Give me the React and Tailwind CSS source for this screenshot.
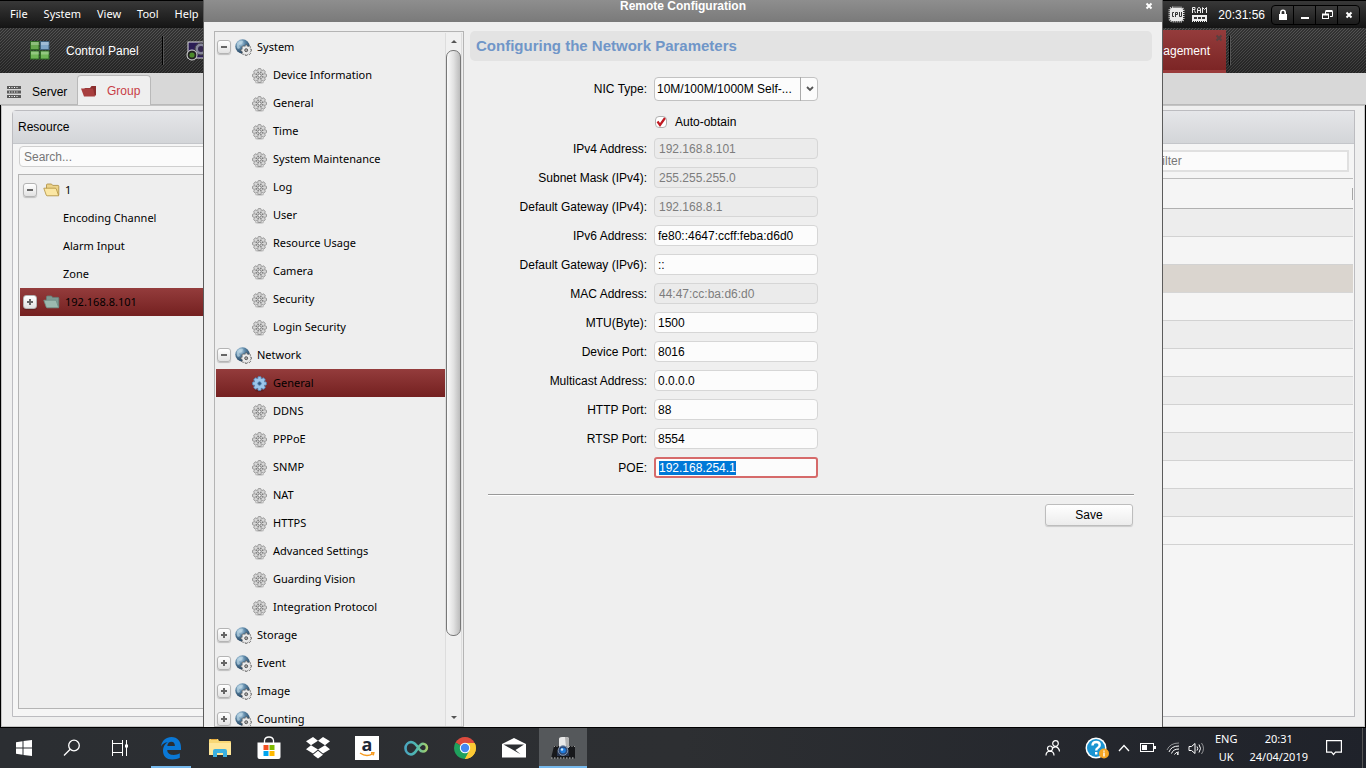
import React, { useEffect, useRef, useState } from "react";

const LABEL_FONT = "font-['Liberation_Sans',Arial,sans-serif]";
const TREE_FONT = "font-['Noto_Sans','Open_Sans',sans-serif]";

const tree = [
  {
    name: "System",
    children: [
      "Device Information",
      "General",
      "Time",
      "System Maintenance",
      "Log",
      "User",
      "Resource Usage",
      "Camera",
      "Security",
      "Login Security",
    ],
  },
  {
    name: "Network",
    children: [
      "General",
      "DDNS",
      "PPPoE",
      "SNMP",
      "NAT",
      "HTTPS",
      "Advanced Settings",
      "Guarding Vision",
      "Integration Protocol",
    ],
  },
  { name: "Storage", children: [] },
  { name: "Event", children: [] },
  { name: "Image", children: [] },
  { name: "Counting", children: [] },
];

const fields = [
  { id: "ipv4", label: "IPv4 Address:", value: "192.168.8.101", disabled: true },
  { id: "mask", label: "Subnet Mask (IPv4):", value: "255.255.255.0", disabled: true },
  { id: "gw4", label: "Default Gateway (IPv4):", value: "192.168.8.1", disabled: true },
  { id: "ipv6", label: "IPv6 Address:", value: "fe80::4647:ccff:feba:d6d0" },
  { id: "gw6", label: "Default Gateway (IPv6):", value: "::" },
  { id: "mac", label: "MAC Address:", value: "44:47:cc:ba:d6:d0", disabled: true },
  { id: "mtu", label: "MTU(Byte):", value: "1500" },
  { id: "devport", label: "Device Port:", value: "8016" },
  { id: "multicast", label: "Multicast Address:", value: "0.0.0.0" },
  { id: "http", label: "HTTP Port:", value: "88" },
  { id: "rtsp", label: "RTSP Port:", value: "8554" },
];

/* ---------- small drawings ---------- */

function Gear({ active }) {
  const spokes = [0, 45, 90, 135, 180, 225, 270, 315];
  const dark = active ? "#4f82b3" : "#8a8a8a";
  const light = active ? "#9cc6ea" : "#d6d6d6";
  return (
    <svg width="15" height="16" viewBox="0 0 16 17" className="shrink-0" aria-hidden="true">
      <ellipse cx="8" cy="15.6" rx="5" ry="0.8" fill="#000" opacity="0.25" />
      {spokes.map((a) => (
        <rect key={a} x="6.2" y="0.6" width="3.6" height="4.500" rx="1" fill={light} stroke={dark} strokeWidth="0.9" transform={`rotate(${a} 8 8)`} />
      ))}
      <circle cx="8" cy="8" r="5.300" fill={light} />
      {!active &&
        spokes.map((a) => (
          <circle key={a} cx="8" cy="4.300" r="0.9" fill="#7c7c7c" transform={`rotate(${a + 22} 8 8)`} />
        ))}
      <circle cx="8" cy="8" r="1.800" fill={active ? "#33567a" : "#f4f4f4"} stroke={active ? dark : "#6c6c6c"} strokeWidth="1" />
    </svg>
  );
}

function Globe() {
  const spokes = [0, 45, 90, 135, 180, 225, 270, 315];
  return (
    <svg width="17" height="17" viewBox="0 0 17 17" className="shrink-0" aria-hidden="true">
      <defs>
        <radialGradient id="globeFill" cx="0.35" cy="0.25" r="0.8">
          <stop offset="0" stopColor="#c3dcec" />
          <stop offset="0.4" stopColor="#5d88a8" />
          <stop offset="1" stopColor="#1d3a55" />
        </radialGradient>
      </defs>
      <circle cx="7.500" cy="7.500" r="7.200" fill="url(#globeFill)" />
      <path d="M2 4q3-3 6-2l-1 3-3 1 1 3-2 1q-2-2-1-6z" fill="#b9d4e2" opacity="0.7" />
      {spokes.map((a) => (
        <rect key={a} x="10.200" y="5.800" width="2" height="3" rx="0.6" fill="#eee" stroke="#444" strokeWidth="0.7" transform={`rotate(${a} 11.2 11.2)`} />
      ))}
      <circle cx="11.200" cy="11.200" r="4" fill="#eaeaea" />
      <circle cx="11.200" cy="11.200" r="1.500" fill="#aaa" stroke="#444" strokeWidth="0.8" />
    </svg>
  );
}

function Toggle({ open, label, onClick }) {
  return (
    <button
      type="button"
      aria-label={label}
      onClick={onClick}
      className="flex h-3.5 w-3.5 shrink-0 items-center justify-center rounded-[3px] border border-[#b4b4b4] bg-gradient-to-b from-white to-[#e2e2e2] shadow-[0_1px_1px_rgba(0,0,0,0.2)]"
    >
      <svg width="8" height="8" viewBox="0 0 8 8" aria-hidden="true">
        <path d={open ? "M1 3h6v2H1z" : "M1 3h2V1h2v2h2v2H5v2H3V5H1z"} fill="#666" />
      </svg>
    </button>
  );
}

function Folder({ tone }) {
  const yellow = tone === "yellow";
  return (
    <svg width="17" height="14" viewBox="0 0 17 14" className="shrink-0" aria-hidden="true">
      <path d="M3.500 12V2q0-1 1-1h4l1.200 1.400H15q.8 0 .8.8V12z" fill={yellow ? "#ecd38a" : "#7d9a92"} stroke={yellow ? "#a98a3c" : "#66807a"} strokeWidth="0.8" />
      <path d="M.8 5.200h11.400q.8 0 1.100.8l2.400 6.800H4.200q-.7 0-1-.8z" fill={yellow ? "#fbe7a4" : "#9bbab0"} stroke={yellow ? "#b0903f" : "#6e8f86"} strokeWidth="0.8" />
    </svg>
  );
}

/* ---------- client window behind the dialog ---------- */

function WindowBar() {
  const buttons = [
    ["Lock", <g key="l"><rect x="3" y="6" width="8" height="6" fill="#fff" /><path d="M4.800 6V4.500a2.200 2.200 0 0 1 4.400 0V6" fill="none" stroke="#fff" strokeWidth="1.600" /></g>],
    ["Minimize", <rect key="m" x="3" y="9" width="8" height="2" fill="#fff" />],
    ["Restore", <g key="r" fill="none" stroke="#fff"><path d="M5.500 6V3.500h7v5H10" /><path d="M5.500 3h7" strokeWidth="2" /><rect x="2.500" y="6.500" width="6" height="4" /><path d="M2 6.500h7" strokeWidth="2" /></g>],
    ["Close", <path key="c" d="M4.500 4.500l5 5M9.500 4.500l-5 5" stroke="#fff" strokeWidth="2" />],
  ];
  return (
    <div className="flex h-7 shrink-0 items-center border-t border-black bg-gradient-to-b from-[#383838] to-[#151515] pr-1.5 text-white">
      <nav className={`flex items-center gap-4 pl-2.5 text-[11px] ${TREE_FONT}`}>
        {["File", "System", "View", "Tool", "Help"].map((m) => (
          <button key={m} type="button">{m}</button>
        ))}
      </nav>
      <div className="ml-auto flex items-center">
        <svg width="17" height="17" viewBox="0 0 17 17" aria-hidden="true">
          <rect x="1.500" y="1.500" width="14" height="14" rx="3" fill="none" stroke="#ddd" strokeWidth="2" strokeDasharray="1 1" />
          <rect x="2" y="2" width="13" height="13" rx="2" fill="#e8e8e8" />
          <path d="M6 6.500H4.500v4H6M7.500 11V6.500h2v2h-2M11.500 6v4.500h2V6" fill="none" stroke="#333" />
        </svg>
        <svg width="17" height="17" viewBox="0 0 17 17" className="ml-1.5" aria-hidden="true">
          <path d="M1.500 7V1.500h2.500v2H2M3.500 4.500l1 2.500M6.500 7V3l1-1.500h1l1 1.500v4M6.500 4.500h3M11.500 7V1.500l2 2 2-2V7" fill="none" stroke="#eee" />
          <rect x="1" y="9" width="15" height="6" fill="#eee" />
          <path d="M3 11h3v2H3zM7 11h3v2H7zM11 11h3v2h-3z" fill="#333" />
          <path d="M1 15.500h15" stroke="#eee" strokeDasharray="1 1" />
        </svg>
        <span className="mr-1.5 ml-2.5 text-xs">20:31:56</span>
        <div className="flex h-5 overflow-hidden rounded-sm border border-black bg-gradient-to-b from-[#3b3b3b] to-[#1c1c1c]">
          {buttons.map(([name, art]) => (
            <button key={name} type="button" aria-label={name} className="flex w-[22px] items-center justify-center border-r border-black last:w-[21px] last:border-r-0">
              <svg width="14" height="14" viewBox="0 0 14 14" aria-hidden="true">{art}</svg>
            </button>
          ))}
        </div>
      </div>
    </div>
  );
}

function Toolbar() {
  return (
    <div className="flex h-[45px] shrink-0 items-stretch bg-[linear-gradient(135deg,rgba(0,0,0,0.4)_25%,transparent_25%,transparent_50%,rgba(0,0,0,0.4)_50%,rgba(0,0,0,0.4)_75%,transparent_75%),linear-gradient(#555,#3c3c3c)] bg-[length:3px_3px,100%_100%] text-xs text-white">
      <button type="button" className="flex items-center pl-[30px]">
        <svg width="20" height="19" viewBox="0 0 20 19" aria-hidden="true">
          <rect x="0.500" y="0.500" width="8.500" height="8" fill="#68a84f" stroke="#2f6a24" />
          <rect x="10.500" y="0.500" width="8.500" height="8" fill="#7fa6c8" stroke="#3e627f" />
          <rect x="0.500" y="10" width="8.500" height="8" fill="#6fb556" stroke="#2f6a24" />
          <rect x="10.500" y="10" width="8.500" height="8" fill="#6fb556" stroke="#2f6a24" />
          <path d="M1 1h8v3H1zM1 10.500h8v3H1zM11 10.500h8v3h-8zM11 1h8v3h-8z" fill="#fff" opacity="0.250" />
        </svg>
        <span className="ml-4">Control Panel</span>
      </button>
      <span className="my-2 ml-[23px] w-0.5 border-l border-black bg-[#555]" />
      <button type="button" className="ml-[22px] flex items-center" aria-label="Main View">
        <svg width="22" height="22" viewBox="0 0 22 22" aria-hidden="true">
          <rect x="2" y="2" width="20" height="16" fill="#2b1d55" stroke="#ddd" />
          <circle cx="15" cy="9" r="6" fill="#85859a" stroke="#444" />
          <circle cx="15" cy="9" r="3" fill="#33274d" />
          <circle cx="6" cy="15" r="5" fill="#222" stroke="#ddd" />
          <circle cx="6" cy="15" r="2.600" fill="#4c8a2b" />
        </svg>
      </button>
      <div className="mt-0.5 mr-[3px] ml-auto flex items-center border-b-[3px] border-[#9a3b3b] bg-gradient-to-b from-[#943c3c] to-[#7c2525] pr-0.5 pl-4">
        <button type="button" className="pt-0.5">Device Management</button>
        <svg width="14" height="8" viewBox="0 0 14 8" className="-mt-6" aria-hidden="true">
          <path d="M6.500 1.500l5 5M11.500 1.500l-5 5" stroke="#5b4040" strokeWidth="2" />
        </svg>
      </div>
      <span className="my-2 mr-[135px] w-0.5 border-l border-black bg-[#555]" />
    </div>
  );
}

function TabStrip() {
  return (
    <div className="flex h-8 shrink-0 items-end border-b border-[#b9b9b9] bg-[#d8d8d8] text-xs">
      <button type="button" className="flex h-[25px] w-[77px] items-center pl-[7px]">
        <svg width="14" height="12" viewBox="0 0 14 12" aria-hidden="true">
          <path d="M0 0h14v3H0zM0 4.500h14v3H0zM0 9h14v3H0z" fill="#5a5a5a" />
          <path d="M2 1.500h10M2 6h10M2 10.500h10" stroke="#fff" strokeDasharray="1 1.500" />
        </svg>
        <span className="ml-[11px]">Server</span>
      </button>
      <button type="button" className="-mb-px flex h-[30px] w-[74px] items-center rounded-t border border-b-0 border-[#b9b9b9] bg-[#efefef] pl-[3px] text-[#c83c46]">
        <svg width="16" height="12" viewBox="0 0 16 12" aria-hidden="true">
          <path d="M3 3h6l1.500-2H15v9l-1 1z" fill="#8b2e2e" />
          <path d="M0 3.500h12l2 8H3z" fill="#a83e3e" />
        </svg>
        <span className="ml-2.5">Group</span>
      </button>
    </div>
  );
}

const PANEL = "flex flex-col border border-[#bcbcc0] bg-[#f5f5f5]";
const PANEL_HEAD =
  "flex h-[33px] shrink-0 items-center border-b border-[#c4c6ca] bg-gradient-to-b from-[#e5e6e9] to-[#d3d5d8] px-[5px] text-xs";

function ResourcePanel() {
  return (
    <section className={`${PANEL} w-[240px] rounded-t-sm`}>
      <h2 className={PANEL_HEAD}>Resource</h2>
      <input
        aria-label="Search"
        placeholder="Search..."
        className="mx-1.5 mt-0.5 h-[21px] shrink-0 rounded-sm border border-[#cfcfcf] bg-[#fbfbfb] px-1 text-xs placeholder:text-[#777]"
      />
      <div className={`mx-[5px] mt-[7px] mb-[7px] flex-1 overflow-hidden border border-[#b4b4b4] bg-[#eee] pt-px pl-px text-[11px] ${TREE_FONT}`}>
        <div className="flex h-7 items-center pl-[3px]">
          <Toggle open label="Collapse group 1" />
          <span className="ml-1.5 flex items-center gap-[5px]"><Folder tone="yellow" />1</span>
        </div>
        {["Encoding Channel", "Alarm Input", "Zone"].map((t) => (
          <div key={t} className="flex h-7 items-center pl-[43px]">{t}</div>
        ))}
        <div className="flex h-7 items-center bg-gradient-to-b from-[#943c3c] to-[#742020] pl-[3px]">
          <Toggle label="Expand 192.168.8.101" />
          <span className="ml-1.5 flex items-center gap-[5px]"><Folder tone="green" />192.168.8.101</span>
        </div>
      </div>
    </section>
  );
}

function DevicePanel() {
  const rows = Array.from({ length: 12 }, (_, i) => i);
  return (
    <section className={`${PANEL} flex-1`}>
      <div className={PANEL_HEAD} />
      <div className="flex h-[34px] shrink-0 items-center justify-end pr-[5px]">
        <input
          aria-label="Filter"
          placeholder="Filter"
          className="h-[22px] w-[198px] border-2 border-[#e0e0e0] bg-[#fbfbfb] px-0.5 text-xs placeholder:text-[#777]"
        />
      </div>
      <table className="mr-px border-t border-[#bcbcbc]">
        <thead>
          <tr className="h-[30px] border-b border-[#b0b0b0]">
            <th scope="col" className="p-0">
              <div className="ml-auto h-3 w-px bg-[#a5a5a5]" />
            </th>
          </tr>
        </thead>
        <tbody>
          {rows.map((i) => (
            <tr
              key={i}
              className={
                i === 2
                  ? "h-7 border-b border-[#d6d6d6] bg-[#dad5cf]"
                  : "h-7 border-b border-[#d2d2d2] odd:bg-[#ededed]"
              }
            >
              <td />
            </tr>
          ))}
        </tbody>
      </table>
    </section>
  );
}

/* ---------- remote configuration dialog ---------- */

function ConfigTree() {
  const [open, setOpen] = useState({ System: true, Network: true });
  return (
    <aside className={`flex w-[250px] shrink-0 overflow-hidden border border-[#b4b4b4] bg-[#eee] pt-px pl-px text-[11px] ${TREE_FONT}`}>
      <ul className="h-0 flex-1">
        {tree.map((group) => (
          <React.Fragment key={group.name}>
            <li className="flex h-7 items-center pl-px">
              <Toggle
                open={open[group.name]}
                label={`Toggle ${group.name}`}
                onClick={() => setOpen({ ...open, [group.name]: !open[group.name] })}
              />
              <span className="ml-1 flex items-center gap-[5px] pt-px"><Globe />{group.name}</span>
            </li>
            {open[group.name] &&
              group.children.map((child) => {
                const active = group.name === "Network" && child === "General";
                return (
                  <li key={child}>
                    <button
                      type="button"
                      className={`flex h-7 w-full items-center gap-1.5 pt-px pl-9 ${
                        active ? "bg-gradient-to-b from-[#943c3c] to-[#742020]" : ""
                      }`}
                    >
                      <Gear active={active} />
                      {child}
                    </button>
                  </li>
                );
              })}
          </React.Fragment>
        ))}
      </ul>
      <div className="mr-px flex w-[17px] shrink-0 flex-col border-x border-[#ddd] bg-[#f0f0f0]">
        <div className="flex h-[17px] items-center justify-center">
          <svg width="6" height="4" viewBox="0 0 6 4" aria-hidden="true"><path d="M3 0l3 3H0z" fill="#555" /></svg>
        </div>
        <div className="h-[586px] shrink rounded-[7px] border border-[#777] bg-gradient-to-r from-[#fafafa] via-[#e2e2e2] to-[#bcbcbc]" />
        <div className="mt-auto flex h-4 items-center justify-center">
          <svg width="6" height="4" viewBox="0 0 6 4" aria-hidden="true"><path d="M0 0h6L3 3z" fill="#555" /></svg>
        </div>
      </div>
    </aside>
  );
}

function NetworkForm() {
  const poe = useRef(null);
  useEffect(() => {
    poe.current.focus({ preventScroll: true });
    poe.current.select();
  }, []);
  return (
    <form className="flex min-w-0 flex-1 flex-col text-xs" onSubmit={(e) => e.preventDefault()}>
      <h2 className="flex h-[30px] items-center rounded-[5px] bg-[#e3e3e3] px-1.5 text-[15px] font-bold text-[#7096c8]">
        Configuring the Network Parameters
      </h2>
      <div className="mt-4 grid grid-cols-[177px_164px] items-center gap-x-[7px] gap-y-2">
        <label htmlFor="nic" className="text-right">NIC Type:</label>
        <div className="relative h-6">
          <select id="nic" className="h-6 w-full appearance-none rounded-sm border border-[#c2c2c2] bg-[#fcfcfc] pr-5 pl-0.5">
            <option>10M/100M/1000M Self-...</option>
          </select>
          <span className="pointer-events-none absolute inset-y-0 right-0 flex w-[18px] items-center justify-center border-l border-[#aaa]">
            <svg width="8" height="6" viewBox="0 0 8 6" aria-hidden="true"><path d="M1 1l3 3 3-3" fill="none" stroke="#555" strokeWidth="1.800" /></svg>
          </span>
        </div>
        <div className="col-start-2 flex h-[21px] items-center gap-2 pt-1 pl-px">
          <span className="relative flex h-3 w-3">
            <input id="auto" type="checkbox" defaultChecked className="peer h-3 w-3 appearance-none rounded-sm border border-[#b0b0b0] bg-white" />
            <svg width="12" height="12" viewBox="0 0 12 12" className="pointer-events-none absolute inset-0 hidden peer-checked:block" aria-hidden="true">
              <path d="M2.500 5.500l2.500 3.500 5-7" fill="none" stroke="#c01a22" strokeWidth="2.200" />
            </svg>
          </span>
          <label htmlFor="auto">Auto-obtain</label>
        </div>
        {fields.map((f) => (
          <React.Fragment key={f.id}>
            <label htmlFor={f.id} className="text-right">{f.label}</label>
            <input
              id={f.id}
              defaultValue={f.value}
              disabled={f.disabled}
              className="h-[21px] w-full rounded-sm border border-[#d6d6d6] bg-[#fcfcfc] px-[3px] disabled:bg-[#ebebeb] disabled:px-1 disabled:text-[#7d7d7d]"
            />
          </React.Fragment>
        ))}
        <label htmlFor="poe" className="text-right">POE:</label>
        <input
          id="poe"
          ref={poe}
          defaultValue="192.168.254.1"
          className="h-[21px] w-full rounded-[3px] border-2 border-[#d66a6a] bg-[#fcfcfc] px-[3px] leading-[15px] outline-none selection:bg-[#0078d7] selection:text-white"
        />
      </div>
      <div className="mt-4 mr-[18px] ml-[18px] border-t border-[#999] pt-[9px] text-right shadow-[inset_0_1px_0_white]">
        <button type="submit" className="mr-px h-[22px] w-[88px] rounded-[3px] border border-[#bdbdbd] bg-gradient-to-b from-white to-[#ececec] shadow-[0_1px_1px_rgba(0,0,0,0.15)]">
          Save
        </button>
      </div>
    </form>
  );
}

function Dialog() {
  return (
    <div role="dialog" aria-label="Remote Configuration" className="absolute inset-x-[203px] inset-y-0 flex flex-col overflow-hidden border-x border-[#5c5c5c] bg-[#efefef]">
      <header className="relative flex h-[22px] shrink-0 justify-center bg-gradient-to-b from-[#8e8e8e] to-[#7a7a7a] text-xs leading-3 font-bold text-white">
        <h1>Remote Configuration</h1>
        <button type="button" aria-label="Close dialog" className="absolute top-0 right-1.5 h-3 w-3">
          <svg width="10" height="10" viewBox="0 0 10 10" aria-hidden="true"><path d="M2.500 2.500l5 5M7.500 2.500l-5 5" stroke="#fff" strokeWidth="2" /></svg>
        </button>
      </header>
      <div className="flex min-h-0 flex-1 gap-1.5 pt-[9px] pr-2.5 pl-2.5">
        <ConfigTree />
        <NetworkForm />
      </div>
    </div>
  );
}

/* ---------- taskbar ---------- */

const apps = [
  {
    name: "Microsoft Edge",
    underline: true,
    art: (
      <svg width="22" height="24" viewBox="0 0 22 24">
        <path d="M1 10.500C2 4.500 6 1 11.500 1 17.500 1 21 5.500 21 11.500V14H7.200c.2 3.500 2.900 4.900 6.300 4.900 2.400 0 4.500-.6 6.300-1.700v4.600c-2 1.100-4.600 1.700-7.500 1.700C6.500 23.500 3 20 3 15c0-4.200 2-7.500 5-8.800C4.800 6.300 2.300 8 1 10.500zm6.300-.6h7.600c0-2.700-1.300-4.200-3.600-4.200-2.200 0-3.700 1.600-4 4.200z" fill="#0a78d6" />
      </svg>
    ),
  },
  {
    name: "File Explorer",
    art: (
      <svg width="22" height="20" viewBox="0 0 22 20">
        <path d="M0 2q0-1 1-1h8l1 2h11q1 0 1 1v13H0z" fill="#f8d775" />
        <path d="M0 5h22v12H0z" fill="#ffe79a" />
        <path d="M2 1.500h6" stroke="#e5a93c" />
        <path d="M4 19v-6q0-2 2-2h10q2 0 2 2v6h-4v-4H8v4z" fill="#3bb0e0" />
      </svg>
    ),
  },
  {
    name: "Microsoft Store",
    art: (
      <svg width="24" height="24" viewBox="0 0 24 24">
        <path d="M7.500 7V4.500Q8 1 12 1t4.500 3.500V7" fill="none" stroke="#fff" strokeWidth="1.300" />
        <path d="M.5 6.500h23V21q0 2-2 2h-19q-2 0-2-2z" fill="#fff" />
        <path d="M6.500 9h5v5h-5z" fill="#f25022" /><path d="M12.500 9h5v5h-5z" fill="#7fba00" />
        <path d="M6.500 15h5v5h-5z" fill="#00a4ef" /><path d="M12.500 15h5v5h-5z" fill="#ffb900" />
      </svg>
    ),
  },
  {
    name: "Dropbox",
    art: (
      <svg width="24" height="22" viewBox="0 0 24 22">
        <path d="M7 0l5 3.800-7 4.400L0 4.200zM17 0l-5 3.800 7 4.400 5-4zM0 12.200l5-4 7 4.400-5 3.800zM24 12.200l-5-4-7 4.400 5 3.800zM7 17.700l5-3.900 5 3.900-5 3.800z" fill="#fff" />
      </svg>
    ),
  },
  {
    name: "Amazon",
    art: (
      <span className="flex h-6 w-6 flex-col items-center bg-white font-['Open_Sans',sans-serif] text-lg leading-4 font-bold text-[#1f2a37]">
        <span className="leading-4">a</span>
        <svg width="16" height="6" viewBox="0 0 16 6">
          <path d="M1 1q6.500 4.500 12.500.8M12 .7l2.800.1-.6 2.600" fill="none" stroke="#f79a1e" strokeWidth="1.500" />
        </svg>
      </span>
    ),
  },
  {
    name: "Infinity",
    art: (
      <svg width="25" height="16" viewBox="0 0 25 16">
        <defs>
          <linearGradient id="loop" x1="0" x2="1"><stop offset="0" stopColor="#4aa6c0" /><stop offset="0.500" stopColor="#4fb8b0" /><stop offset="1" stopColor="#a4cf6a" /></linearGradient>
        </defs>
        <path d="M13 9.500C10.500 13.500 9 14.500 7 14.500A6.300 6.300 0 0 1 7 2c4 0 6.500 4.500 8.500 7.500 1 1.500 2 2 3.500 2a3.900 3.900 0 0 0 0-7.800c-2.500 0-4 2.800-6 5.800z" fill="none" stroke="url(#loop)" strokeWidth="2.600" />
      </svg>
    ),
  },
  {
    name: "Google Chrome",
    art: (
      <svg width="22" height="22" viewBox="0 0 22 22">
        <path d="M11 11L1.500 5.500A11 11 0 0 1 20.500 5.500z" fill="#dd4b3e" />
        <path d="M11 11H20.500l0-5.500A11 11 0 0 1 11 22z" fill="#fcc934" />
        <path d="M1.500 5.500A11 11 0 0 0 11 22l4.500-8.500L11 11z" fill="#1fa15d" />
        <path d="M11 6h9.700A11 11 0 0 1 11 22l4.500-8.500z" fill="#fcc934" />
        <circle cx="11" cy="11" r="5.200" fill="#fff" /><circle cx="11" cy="11" r="4.200" fill="#4688f1" />
      </svg>
    ),
  },
  {
    name: "Mail",
    art: (
      <svg width="24" height="20" viewBox="0 0 24 20">
        <path d="M0 6L12 0l12 6v13.500H0z" fill="#fff" /><path d="M1.500 6.500H22L13.500 12l5 4.200z" fill="#2c2f33" />
      </svg>
    ),
  },
  {
    name: "Guarding Vision",
    underline: true,
    active: true,
    art: (
      <svg width="26" height="23" viewBox="0 0 26 23">
        <path d="M4 9h21v12.500H1z" fill="#17181b" />
        <path d="M1 21h23" stroke="#ccc" strokeDasharray="1.500 1.500" />
        <path d="M4 9.500h21" stroke="#999" strokeDasharray="1 1.500" />
        <path d="M9 2q0-2 3-2h4q3 0 3 2v9H9z" fill="#e9e9e9" />
        <path d="M15 0h1q3 0 3 2v9h-3z" fill="#b2b2b2" />
        <path d="M7 19q-1-10 6-10.500 7 .5 6 10.500z" fill="#26334d" />
        <circle cx="13" cy="13.500" r="4.800" fill="#2e4a78" stroke="#9aa9bd" strokeWidth="0.800" />
        <circle cx="13" cy="13.500" r="2.800" fill="#1f7bdc" /><circle cx="12" cy="12.500" r="1.200" fill="#c9e6ff" />
      </svg>
    ),
  },
];

const TASK_BUTTON = "flex h-10 w-12 items-center justify-center";

function Taskbar() {
  return (
    <footer className={`flex h-10 shrink-0 items-center bg-gradient-to-r from-[#2b2e32] via-[#2d2f32] to-[#1f222a] text-[11px] text-white ${TREE_FONT}`}>
      <button type="button" aria-label="Start" className={TASK_BUTTON}>
        <svg width="16" height="16" viewBox="0 0 16 16"><path d="M0 2.200L6.500 1.300v6.200H0zM7.500 1.100L16 0v7.500H7.500zM0 8.500h6.500v6.200L0 13.800zM7.500 8.500H16V16l-8.500-1.100z" fill="#fff" /></svg>
      </button>
      <button type="button" aria-label="Search Windows" className={TASK_BUTTON}>
        <svg width="18" height="18" viewBox="0 0 18 18" fill="none" stroke="#fff" strokeWidth="1.300"><circle cx="11" cy="6.500" r="5.300" /><path d="M7.200 10.300L1 16.500" /></svg>
      </button>
      <button type="button" aria-label="Task View" className={TASK_BUTTON}>
        <svg width="17" height="16" viewBox="0 0 17 16" fill="none" stroke="#fff"><path d="M.5 0v3.500h10V0M.5 16v-3.500h10V16M14.500 0v16" /><rect x="0.500" y="3.500" width="10" height="9" /><path d="M13 4.500h3v3h-3z" fill="#fff" stroke="none" /></svg>
      </button>
      <div className="ml-[3px] flex gap-px">
        {apps.map((a) => (
          <button
            key={a.name}
            type="button"
            aria-label={a.name}
            className={`${TASK_BUTTON} relative ${a.active ? "bg-[#55585b]" : ""}`}
          >
            {a.art}
            {a.underline && <span className={`absolute bottom-0 h-0.5 bg-[#76b9ed] ${a.active ? "w-12" : "w-10"}`} />}
          </button>
        ))}
      </div>
      <div className="ml-auto flex h-10 items-center">
        <svg width="16" height="16" viewBox="0 0 16 16" fill="none" stroke="#fff" strokeWidth="1.200" className="mr-6"><circle cx="10.500" cy="3.500" r="2.800" /><path d="M8 8q2.500-2.500 5 0 1.500 1.500 1.500 3.500" /><circle cx="5" cy="8.500" r="2.500" /><path d="M1 15.500q0-4 4-4.300 4 .3 4 4.300" /></svg>
        <svg width="25" height="22" viewBox="0 0 25 22" className="mr-2"><circle cx="11" cy="11" r="10.500" fill="#fff" /><circle cx="11" cy="11" r="9" fill="#1a94d2" /><path d="M7.500 8.500q0-3.500 3.700-3.500 3.500 0 3.500 3 0 2-2 3-1.500.8-1.500 2.500M11.200 15v2.400" fill="none" stroke="#fff" strokeWidth="2.400" /><circle cx="19" cy="16.500" r="5" fill="#f5a623" /><path d="M19 13.500v1.200M19 15.500v4" stroke="#fff" strokeWidth="1.400" /></svg>
        <svg width="12" height="8" viewBox="0 0 12 8" fill="none" stroke="#fff" strokeWidth="1.300" className="mr-2.5"><path d="M1 7l5-5.500L11 7" /></svg>
        <svg width="16" height="10" viewBox="0 0 16 10" className="mr-2.5"><rect x="0.500" y="0.500" width="13" height="8" fill="none" stroke="#fff" /><path d="M2 2h5v5H2zM14 3h2v3h-2z" fill="#fff" /></svg>
        <svg width="14" height="13" viewBox="0 0 14 13" fill="none" stroke="#fff" className="mr-2"><path d="M1 8Q4 1 13 1" opacity="0.500" /><path d="M3 10q2-6 10-6M5.500 11.500Q7 7 13 7M8.500 12.500Q9.500 10 13 10" /><circle cx="11.800" cy="12" r="1" fill="#fff" stroke="none" /></svg>
        <svg width="17" height="13" viewBox="0 0 17 13" fill="none" stroke="#fff" className="mr-2.5"><path d="M1 4.500h2.500L7 1.500v10L3.500 8.500H1zM9 4.500q1.500 2 0 4M11 2.500q3 4 0 8" /><path d="M13.500 1q4 5.500 0 11" opacity="0.500" /></svg>
        <div className="mr-3 text-center leading-[18px]"><div>ENG</div><div>UK</div></div>
        <div className="mr-[18px] text-center leading-[18px]"><div>20:31</div><div>24/04/2019</div></div>
        <button type="button" aria-label="Notifications" className="mr-5">
          <svg width="16" height="16" viewBox="0 0 16 16" fill="none" stroke="#fff" strokeWidth="1.200"><path d="M.6.600h14.800v11.500H9.500L7.500 14.500l-2-2.400H.6z" /></svg>
        </button>
        <span className="h-10 w-1 border-l border-[#555]" />
      </div>
    </footer>
  );
}

export default function App() {
  return (
    <div className={`flex h-screen flex-col overflow-hidden text-black ${LABEL_FONT}`}>
      <main className="relative flex min-h-0 flex-1 flex-col border-b border-black bg-[#efefef]">
        <WindowBar />
        <Toolbar />
        <TabStrip />
        <div className="flex min-h-0 flex-1 gap-2 border-x border-black pt-[5px] pr-2.5 pb-2.5 pl-[11px] shadow-[inset_0_0_0_1px_#c4c4c4]">
          <ResourcePanel />
          <DevicePanel />
        </div>
        <Dialog />
      </main>
      <Taskbar />
    </div>
  );
}
